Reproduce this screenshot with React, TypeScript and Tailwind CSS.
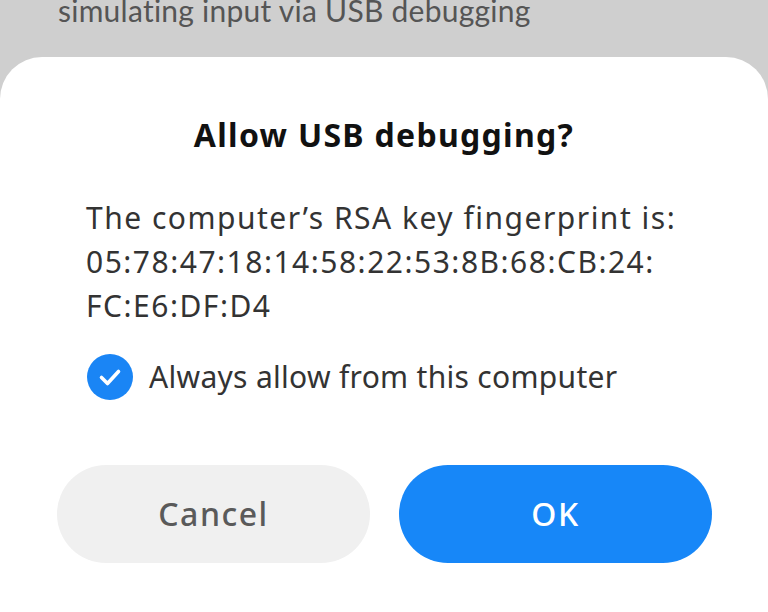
import React from 'react';

const font = { fontFamily: '"Noto Sans", sans-serif' };

function CheckCircle() {
  return (
    <svg width="46" height="46" viewBox="0 0 46 46" className="shrink-0">
      <circle cx="23" cy="23" r="23" fill="#1a85f5" />
      <path d="M14.5 23.5l6 6 11-12" fill="none" stroke="#fff" strokeWidth="3.6" strokeLinecap="round" strokeLinejoin="round" />
    </svg>
  );
}

export default function App() {
  return (
    <div className="w-[768px] h-[612px] bg-[#cfcfcf] overflow-hidden flex flex-col" style={font}>
      {/* dimmed page behind the sheet */}
      <div className="h-[57px] shrink-0 px-[58px]">
        <p className="-mt-[10px] text-[30px] leading-[40px] tracking-[0.25px] text-[#555555] whitespace-nowrap" style={{ fontFamily: 'Lato, sans-serif' }}>
          simulating input via USB debugging
        </p>
      </div>

      {/* bottom sheet dialog */}
      <div className="flex-1 bg-white rounded-t-[42px] flex flex-col">
        <h2 className="pt-[58px] text-center text-[32px] leading-[40px] font-bold tracking-[1.3px] text-[#111111]">
          Allow USB debugging?
        </h2>
        <div className="mt-[41px] pl-[86px] pr-[20px] text-[30px] leading-[44px] tracking-[1.5px] text-[#333333]">
          <p>The computer&rsquo;s RSA key fingerprint is:</p>
          <p>05:78:47:18:14:58:22:53:8B:68:CB:24:</p>
          <p>FC:E6:DF:D4</p>
        </div>
        <label className="mt-[26px] pl-[87px] flex items-center gap-[16px]">
          <CheckCircle />
          <span className="text-[30px] leading-[40px] tracking-[0.3px] text-[#333333]">Always allow from this computer</span>
        </label>
        <div className="mt-[65px] pl-[57px] pr-[56px] flex gap-[29px]">
          <button className="flex-1 h-[98px] rounded-full bg-[#f0f0f0] text-[32px] font-medium tracking-[1.5px] text-[#5a5a5a]">
            Cancel
          </button>
          <button className="flex-1 h-[98px] rounded-full bg-[#1787f8] text-[32px] font-medium tracking-[1.5px] text-white">
            OK
          </button>
        </div>
      </div>
    </div>
  );
}
